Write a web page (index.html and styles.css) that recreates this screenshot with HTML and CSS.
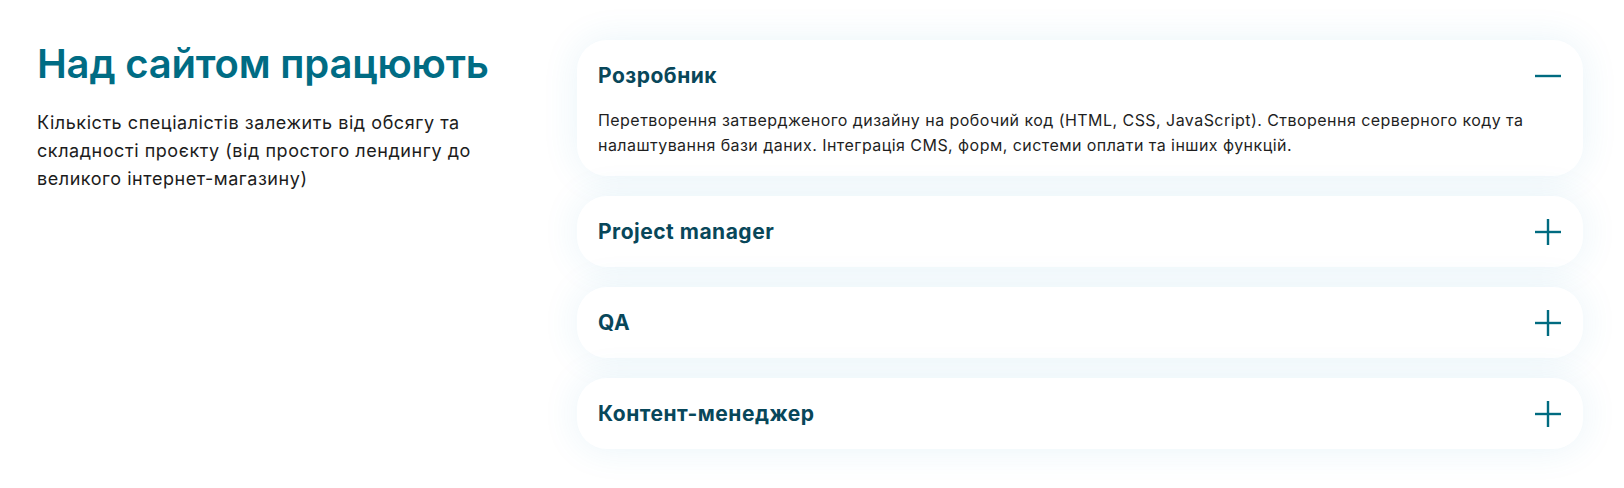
FILE: index.html
```html
<!DOCTYPE html>
<html lang="uk">
<head>
  <meta charset="UTF-8" />
  <meta name="viewport" content="width=device-width, initial-scale=1.0"/>
  <title>Над сайтом працюють</title>
  <link rel="stylesheet" href="styles.css">
</head>
<body>
  <section class="team">
    <!-- Intro column -->
    <div class="team-intro">
      <h2>Над сайтом працюють</h2>
      <p>Кількість спеціалістів залежить від обсягу та складності проєкту (від простого лендингу до великого інтернет-магазину)</p>
    </div>

    <!-- Roles accordion -->
    <div class="roles">
      <div class="role open">
        <div class="role-head">
          <span class="role-title">Розробник</span>
          <svg class="role-icon" viewBox="0 0 26 26"><line x1="0" y1="13" x2="26" y2="13" /></svg>
        </div>
        <div class="role-body">Перетворення затвердженого дизайну на робочий код (HTML, CSS, JavaScript). Створення серверного коду та налаштування бази даних. Інтеграція CMS, форм, системи оплати та інших функцій.</div>
      </div>

      <div class="role">
        <div class="role-head">
          <span class="role-title">Project manager</span>
          <svg class="role-icon" viewBox="0 0 26 26"><line x1="0" y1="13" x2="26" y2="13" /><line x1="13" y1="0" x2="13" y2="26" /></svg>
        </div>
      </div>

      <div class="role">
        <div class="role-head">
          <span class="role-title">QA</span>
          <svg class="role-icon" viewBox="0 0 26 26"><line x1="0" y1="13" x2="26" y2="13" /><line x1="13" y1="0" x2="13" y2="26" /></svg>
        </div>
      </div>

      <div class="role">
        <div class="role-head">
          <span class="role-title">Контент-менеджер</span>
          <svg class="role-icon" viewBox="0 0 26 26"><line x1="0" y1="13" x2="26" y2="13" /><line x1="13" y1="0" x2="13" y2="26" /></svg>
        </div>
      </div>
    </div>
  </section>
</body>
</html>
```

FILE: styles.css
```css
body {
  margin: 0;
  background-color: #fff;
  color: #1c1c1c;
  font-family: Inter, "Noto Sans", sans-serif;
}

.team {
  display: grid;
  grid-template-columns: 500px 1fr;
  column-gap: 40px;
  padding: 40px 41px 36px 37px;
}

.team-intro h2 {
  margin: 0;
  font-size: 40px;
  line-height: 48px;
  font-weight: 600;
  color: #006c84;
  letter-spacing: -0.2px;
}

.team-intro p {
  margin: 21px 0 0 0;
  max-width: 465px;
  font-size: 18px;
  line-height: 28px;
  letter-spacing: 0.55px;
  color: #1c1c1c;
}

.roles {
  display: flex;
  flex-direction: column;
  gap: 20px;
}

.role {
  background-color: #fff;
  border-radius: 30px;
  box-shadow: 0 0 36px rgba(40, 150, 200, 0.1);
}

.role-head {
  display: flex;
  align-items: center;
  justify-content: space-between;
  padding: 21.5px 22px 21.5px 21px;
  cursor: pointer;
}

.role.open .role-head {
  padding-bottom: 18px;
}

.role-title {
  font-size: 21px;
  line-height: 28px;
  font-weight: 700;
  letter-spacing: 0.5px;
  color: #08475a;
}

.role-icon {
  width: 26px;
  height: 26px;
  stroke: #006b80;
  stroke-width: 2.4;
}

.role-body {
  padding: 0 22px 18.5px 21px;
  font-size: 16px;
  line-height: 25px;
  letter-spacing: 0.45px;
  color: #1f1f1f;
}
```
